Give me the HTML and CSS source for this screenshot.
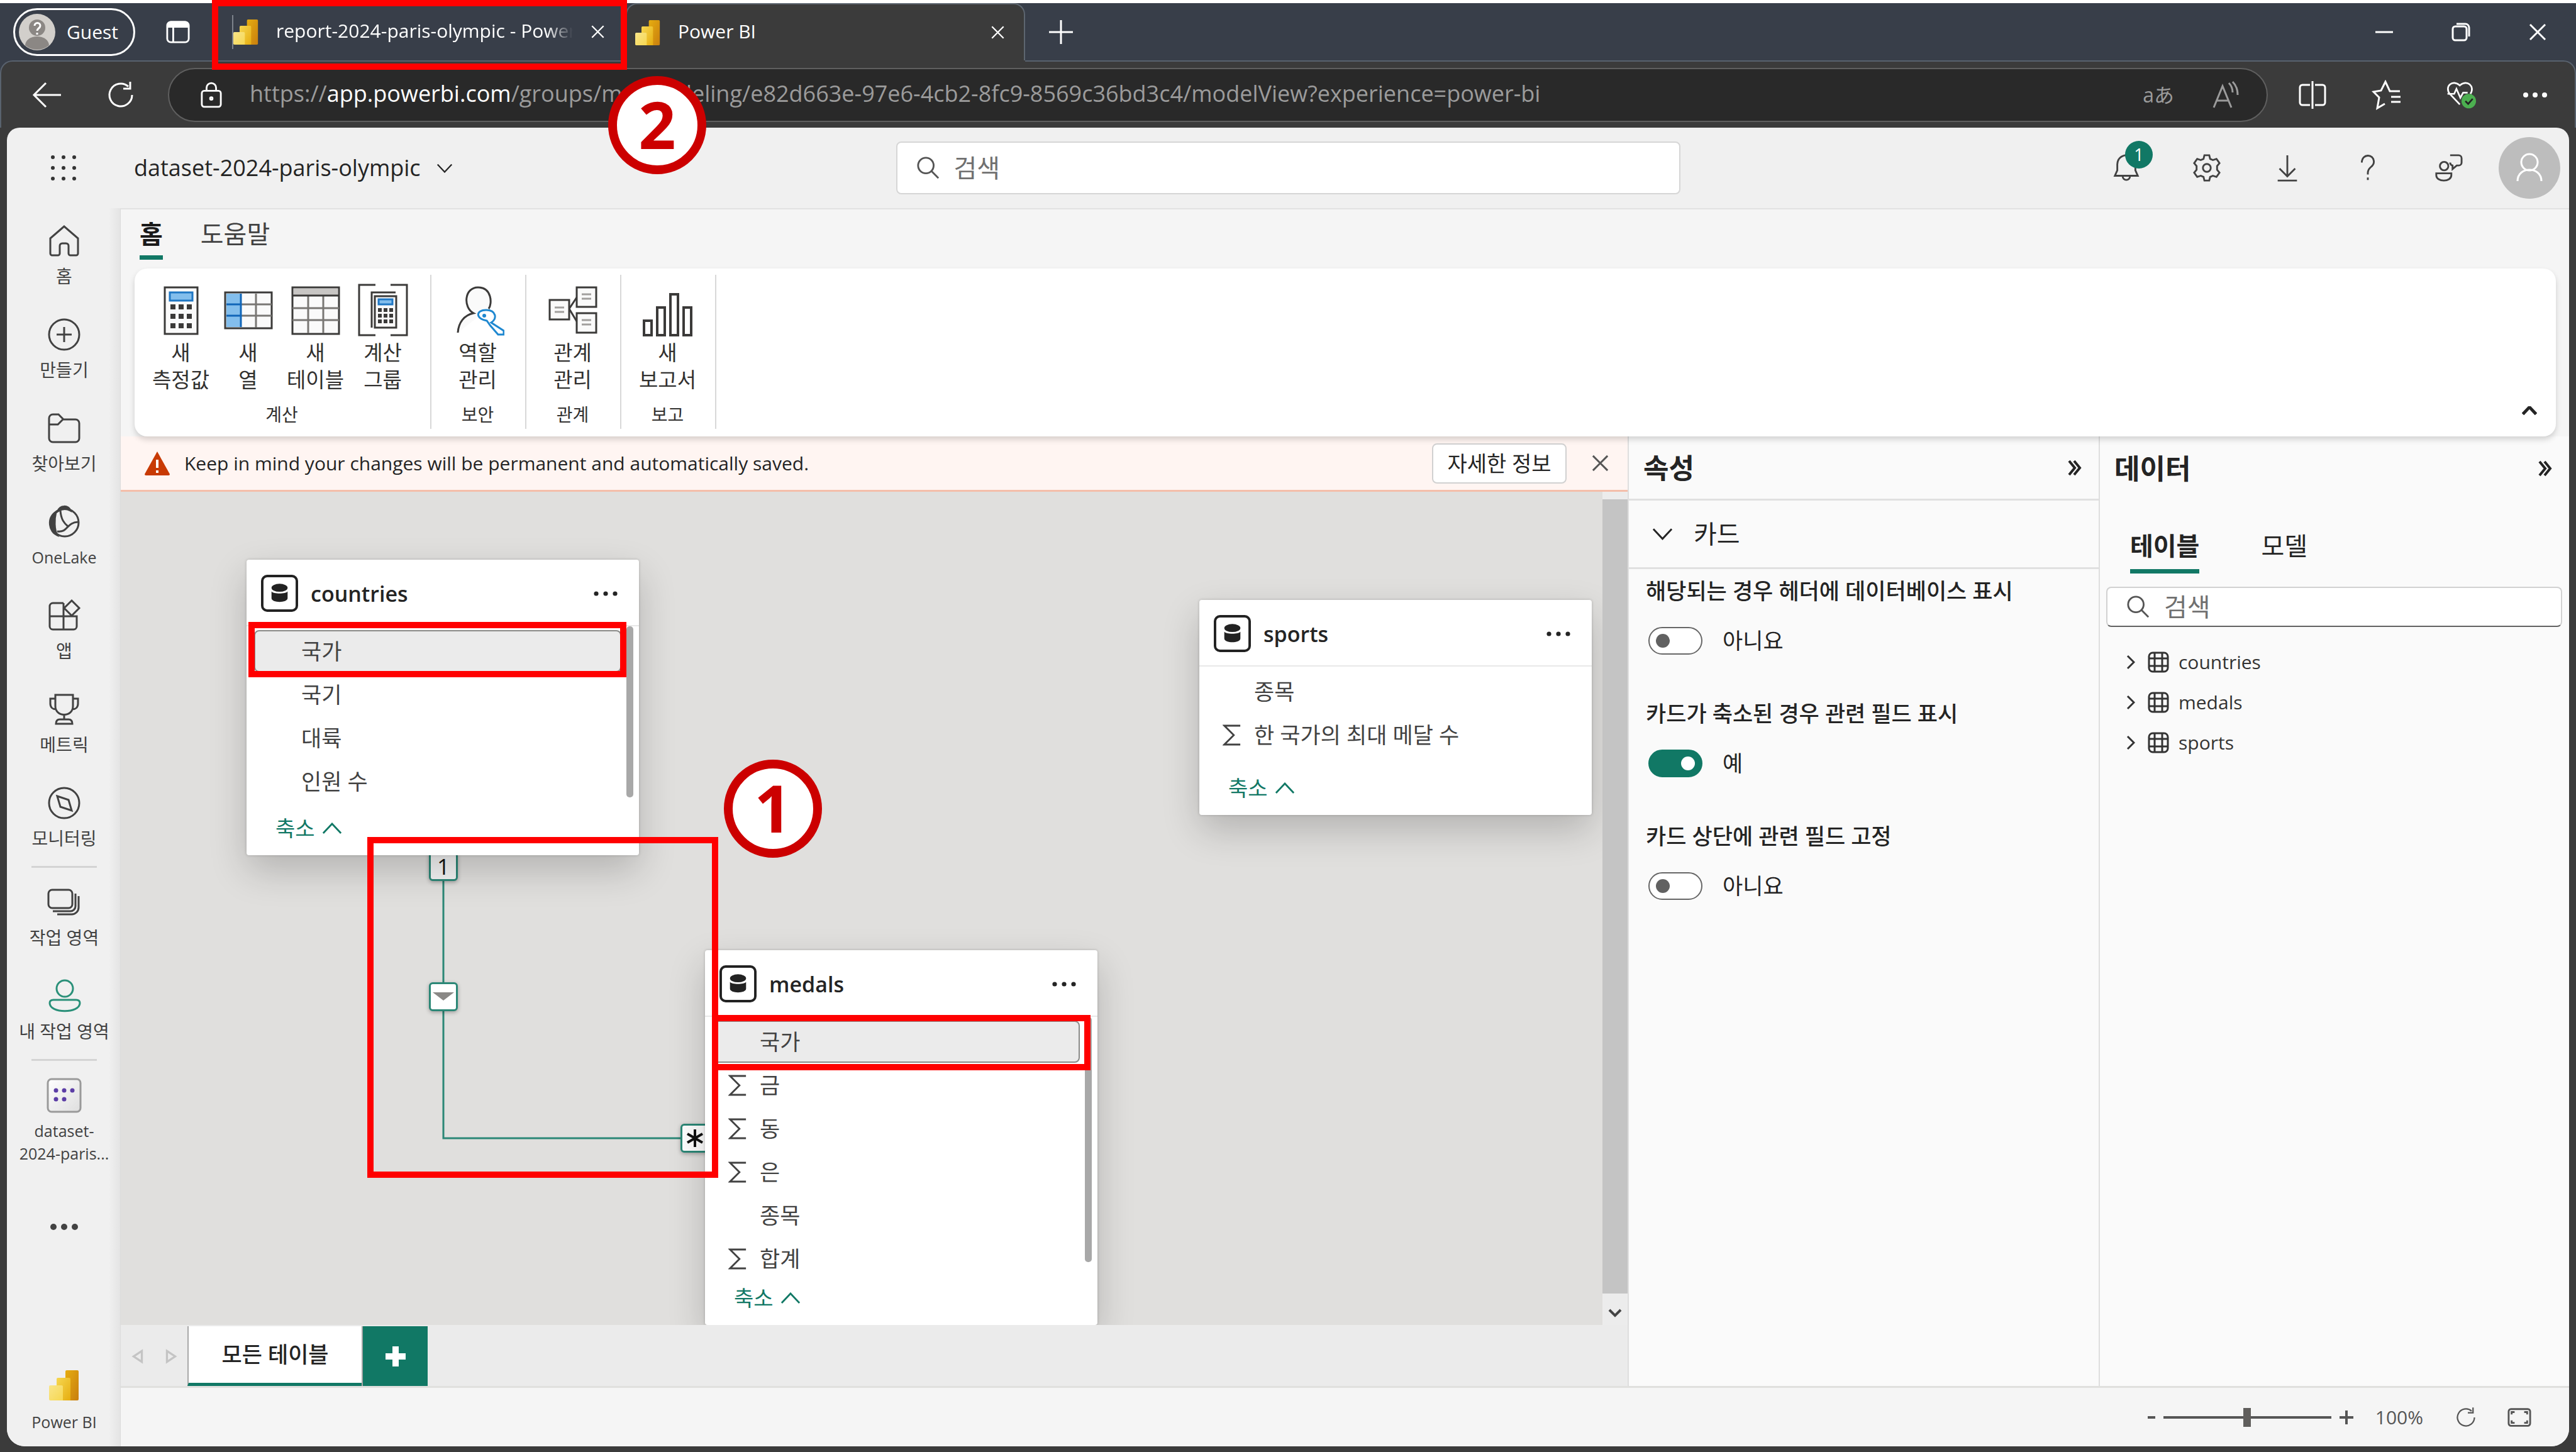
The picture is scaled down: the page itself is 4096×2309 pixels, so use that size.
FILE: index.html
```html
<!DOCTYPE html>
<html lang="ko">
<head>
<meta charset="utf-8">
<title>Power BI</title>
<link rel="stylesheet" href="styles.css">
</head>
<body>
<svg class="defs" aria-hidden="true">
  <defs>
    <linearGradient id="gold-a" x1="0" y1="0" x2="1" y2="1"><stop offset="0" stop-color="#e6ad10"/><stop offset="1" stop-color="#c87e0e"/></linearGradient>
    <linearGradient id="gold-b" x1="0" y1="0" x2="1" y2="1"><stop offset="0" stop-color="#f6d751"/><stop offset="1" stop-color="#e6ad10"/></linearGradient>
    <linearGradient id="gold-c" x1="0" y1="0" x2="1" y2="1"><stop offset="0" stop-color="#f9e589"/><stop offset="1" stop-color="#f6d751"/></linearGradient>
    <linearGradient id="tile" x1="0" y1="0" x2="1" y2="1"><stop offset="0" stop-color="#ffffff"/><stop offset="1" stop-color="#dedede"/></linearGradient>
    <symbol id="pbi" viewBox="0 0 48 48"><rect x="26" y="0" width="21" height="48" rx="2" fill="url(#gold-a)"/><path d="M14 12h18a2 2 0 0 1 2 2v34H12V14a2 2 0 0 1 2-2z" fill="url(#gold-b)"/><path d="M2 24h18a2 2 0 0 1 2 2v22H2a2 2 0 0 1-2-2V26a2 2 0 0 1 2-2z" fill="url(#gold-c)"/></symbol>
    <symbol id="search" viewBox="0 0 40 40"><circle cx="16" cy="16" r="13"/><path d="M25 25l12 12"/></symbol>
    <symbol id="close" viewBox="0 0 30 30"><path d="M3 3l24 24M27 3L3 27"/></symbol>
    <symbol id="reload" viewBox="0 0 48 48"><path d="M42 24a18 18 0 1 1-6-13.400M39 3v11H28"/></symbol>
    <symbol id="sigma" viewBox="0 0 32 36"><path d="M30 2H3l16 16L3 34h27"/></symbol>
    <symbol id="up" viewBox="0 0 34 20"><path d="M2 18L17 2l15 16"/></symbol>
    <symbol id="down" viewBox="0 0 34 20"><path d="M2 2l15 16L32 2"/></symbol>
    <symbol id="dots" viewBox="0 0 40 10"><circle cx="5" cy="5" r="3.600"/><circle cx="20" cy="5" r="3.600"/><circle cx="35" cy="5" r="3.600"/></symbol>
    <symbol id="db" viewBox="0 0 60 60"><rect x="2" y="2" width="56" height="56" rx="8" fill="#fff" stroke="#222" stroke-width="4"/><ellipse cx="30" cy="21" rx="13" ry="6.500" fill="#222"/><path d="M17 27c3 4.500 23 4.500 26 0v11c0 8-26 8-26 0z" fill="#222"/></symbol>
    <symbol id="grid" viewBox="0 0 34 34"><rect x="2" y="2" width="30" height="30" rx="6"/><path d="M11 2v30M23 2v30M2 11h30M2 23h30"/></symbol>
  </defs>
</svg>

<div class="browser">
  <header class="tabstrip">
    <button class="guest"><svg viewBox="0 0 58 58"><circle cx="29" cy="29" r="29" fill="#d2cfcb"/><path d="M10 50a19 14 0 0 1 38 0 29 29 0 0 1-38 0z" fill="#8b8784"/><circle cx="29" cy="22" r="13" fill="#8b8784"/><path d="M25 19c0-6 9-6 9 0 0 4-5 4-5 8m0 3v3" fill="none" stroke="#fff" stroke-width="3"/></svg>Guest</button>
    <button class="icon-btn tab-actions" aria-label="탭 작업"><svg viewBox="0 0 40 40"><rect x="2" y="3" width="36" height="34" rx="6"/><path d="M3 11h34V8a5 5 0 0 0-5-5H8a5 5 0 0 0-5 5z" fill="#fff"/><path d="M12 11v26"/></svg></button>
    <div class="tab tab-idle"><svg class="fav"><use href="#pbi"/></svg><span class="tab-title fade">report-2024-paris-olympic - Power BI</span><button class="icon-btn tab-x" aria-label="닫기"><svg><use href="#close"/></svg></button></div>
    <div class="tab tab-active"><svg class="fav"><use href="#pbi"/></svg><span class="tab-title">Power BI</span><button class="icon-btn tab-x" aria-label="닫기"><svg><use href="#close"/></svg></button></div>
    <button class="icon-btn new-tab" aria-label="새 탭"><svg viewBox="0 0 40 40"><path d="M20 1v38M1 20h38"/></svg></button>
    <div class="win-controls">
      <button class="icon-btn" aria-label="최소화"><svg viewBox="0 0 30 30"><path d="M1 15h28"/></svg></button>
      <button class="icon-btn" aria-label="이전 크기로"><svg viewBox="0 0 30 30"><rect x="2" y="6" width="22" height="22" rx="4"/><path d="M8 2h14a6 6 0 0 1 6 6v14"/></svg></button>
      <button class="icon-btn" aria-label="닫기"><svg><use href="#close"/></svg></button>
    </div>
  </header>

  <div class="toolbar">
    <div class="nav-btns">
      <button class="icon-btn" aria-label="뒤로"><svg viewBox="0 0 48 48"><path d="M22 5L3 24l19 19M3 24h43"/></svg></button>
      <button class="icon-btn" aria-label="새로 고침"><svg><use href="#reload"/></svg></button>
    </div>
    <div class="address">
      <svg class="lock" viewBox="0 0 36 44"><rect x="2" y="15" width="32" height="27" rx="4"/><path d="M10 15v-5a8 8 0 0 1 16 0v5"/><circle cx="18" cy="28" r="2"/></svg>
      <div class="url">https://<span class="host">app.powerbi.com</span>/groups/me/modeling/e82d663e-97e6-4cb2-8fc9-8569c36bd3c4/modelView?experience=power-bi</div>
      <span class="translate">aあ</span>
      <svg class="aloud" viewBox="0 0 44 44"><path d="M3 42L17 8l14 34M8 31h18M27 3c4 4 6 9 6 15M33 1c6 6 8 13 8 21"/></svg>
    </div>
    <div class="tool-btns">
      <button class="icon-btn" aria-label="화면 분할"><svg viewBox="0 0 48 48"><path d="M20 8H8a4 4 0 0 0-4 4v24a4 4 0 0 0 4 4h12M28 8h12a4 4 0 0 1 4 4v24a4 4 0 0 1-4 4H28M24 2v44"/></svg></button>
      <button class="icon-btn" aria-label="즐겨찾기"><svg viewBox="0 0 48 48"><path d="M45 18H29L22 3l-7 14-12 2 9 9-3 17 12-7M31 27h15M31 35h15"/></svg></button>
      <button class="icon-btn" aria-label="브라우저 필수 요소"><svg viewBox="0 0 54 54"><path d="M25 44L7 25C-3 12 12-2 25 10 38-2 53 12 44 25"/><path d="M3 25h12l4-9 7 16 5-9h8"/><circle cx="41" cy="38" r="13" fill="#4caf50" stroke="none"/><path d="M35 38l5 5 8-9" stroke="#222"/></svg></button>
      <button class="icon-btn solid" aria-label="설정 및 기타"><svg viewBox="0 0 48 48"><circle cx="9" cy="24" r="4"/><circle cx="24" cy="24" r="4"/><circle cx="39" cy="24" r="4"/></svg></button>
    </div>
  </div>

  <div class="app">
    <header class="app-header">
      <div class="head-left">
        <button class="icon-btn waffle" aria-label="앱 시작 관리자"><svg viewBox="0 0 42 42"><circle cx="4" cy="4" r="3"/><circle cx="21" cy="4" r="3"/><circle cx="38" cy="4" r="3"/><circle cx="4" cy="21" r="3"/><circle cx="21" cy="21" r="3"/><circle cx="38" cy="21" r="3"/><circle cx="4" cy="38" r="3"/><circle cx="21" cy="38" r="3"/><circle cx="38" cy="38" r="3"/></svg></button>
        <button class="doc-name">dataset-2024-paris-olympic<svg><use href="#down"/></svg></button>
      </div>
      <label class="search-box"><svg><use href="#search"/></svg><input type="search" placeholder="검색" aria-label="검색"></label>
      <div class="head-right">
        <button class="icon-btn bell" aria-label="알림"><svg viewBox="0 0 48 48"><path d="M5 37h38l-4-9V18a15 15 0 0 0-30 0v10zM18 38a6 6 0 0 0 12 0"/></svg><span class="count">1</span></button>
        <button class="icon-btn" aria-label="설정"><svg viewBox="0 0 48 48"><path d="M20 3h8l1.500 6 4.500 2 6-2 5 7-4 5v6l4 5-5 7-6-2-4.500 2L28 45h-8l-1.500-6-4.500-2-6 2-5-7 4-5v-6l-4-5 5-7 6 2 4.500-2z"/><circle cx="24" cy="24" r="6.500"/></svg></button>
        <button class="icon-btn" aria-label="다운로드"><svg viewBox="0 0 48 48"><path d="M24 3v34M11 25l13 13 13-13M8 45h32"/></svg></button>
        <button class="icon-btn" aria-label="도움말"><svg viewBox="0 0 48 48"><path d="M14 15c0-15 20-15 20-1 0 9-10 8-10 18v3M24 40v4"/></svg></button>
        <button class="icon-btn" aria-label="피드백"><svg viewBox="0 0 48 48"><circle cx="17" cy="21" r="7"/><path d="M4 33h25v3c0 12-25 12-25 0zM27 3h14a5 5 0 0 1 5 5v7a5 5 0 0 1-5 5h-3l-7 6v-6c-3-1-4-2-4-5"/></svg></button>
        <button class="avatar" aria-label="계정"><svg viewBox="0 0 98 98"><circle cx="49" cy="40" r="13"/><path d="M30 70c0-24 38-24 38 0"/></svg></button>
      </div>
    </header>

    <nav class="side">
      <a href="#" class="side-item"><svg viewBox="0 0 56 56"><path d="M28 5L6 24v24a3 3 0 0 0 3 3h9a3 3 0 0 0 3-3V36a4 4 0 0 1 4-4h6a4 4 0 0 1 4 4v12a3 3 0 0 0 3 3h9a3 3 0 0 0 3-3V24z"/></svg><span>홈</span></a>
      <a href="#" class="side-item"><svg viewBox="0 0 56 56"><circle cx="28" cy="28" r="24"/><path d="M28 16v24M16 28h24"/></svg><span>만들기</span></a>
      <a href="#" class="side-item"><svg viewBox="0 0 56 56"><path d="M4 12a6 6 0 0 1 6-6h9l8 8h19a6 6 0 0 1 6 6v24a6 6 0 0 1-6 6H10a6 6 0 0 1-6-6zM4 22h14l8-8"/></svg><span>찾아보기</span></a>
      <a href="#" class="side-item"><svg viewBox="0 0 56 56"><circle cx="29" cy="29" r="22"/><path d="M18 11C20 1 36 1 38 10 31 6 24 7 18 11z" fill="#424242"/><path d="M15 12C0 22 4 44 17 49c-5-9-5-25-2-37z" fill="#424242"/><path d="M22 10c1 14 6 20 12 25M17 43c18 2 14-14 33-15"/></svg><span class="latin">OneLake</span></a>
      <a href="#" class="side-item"><svg viewBox="0 0 56 56"><path d="M27 8H10a5 5 0 0 0-5 5v32a5 5 0 0 0 5 5h33a5 5 0 0 0 5-5V29H5M27 8v42M40 4l12 12-12 12-12-12z"/></svg><span>앱</span></a>
      <a href="#" class="side-item"><svg viewBox="0 0 56 56"><path d="M14 5h28v18c0 18-28 18-28 0zM14 11H6v8c0 6 4 9 9 9M42 11h8v8c0 6-4 9-9 9M28 37v7M15 51c0-5 2-7 6-7h14c4 0 6 2 6 7z"/></svg><span>메트릭</span></a>
      <a href="#" class="side-item"><svg viewBox="0 0 56 56"><circle cx="28" cy="28" r="24"/><path d="M17 17l18 6 5 17-18-6z"/></svg><span>모니터링</span></a>
      <hr>
      <a href="#" class="side-item"><svg viewBox="0 0 56 56"><rect x="3" y="8" width="38" height="29" rx="6"/><path d="M46 14v20a8 8 0 0 1-8 8H10M51 18v18a11 11 0 0 1-11 11H17"/></svg><span>작업 영역</span></a>
      <a href="#" class="side-item mine"><svg viewBox="0 0 56 56"><circle cx="29" cy="16" r="13"/><path d="M11 34h36c4 0 6 2 6 5 0 17-48 17-48 0 0-3 2-5 6-5z"/></svg><span>내 작업 영역</span></a>
      <hr>
      <a href="#" class="side-item tall"><svg viewBox="0 0 56 56"><rect x="2" y="2" width="52" height="52" rx="6" fill="url(#tile)" stroke="#9a9a9a"/><g fill="#5c3ea6" stroke="none"><circle cx="15" cy="20" r="3.500"/><circle cx="28" cy="20" r="3.500"/><circle cx="41" cy="20" r="3.500"/><circle cx="15" cy="34" r="3.500"/><circle cx="28" cy="34" r="3.500"/></g></svg><span class="latin">dataset-<br>2024-paris...</span></a>
      <button class="side-item more" aria-label="더 보기"><svg viewBox="0 0 56 56"><circle cx="11" cy="28" r="5"/><circle cx="28" cy="28" r="5"/><circle cx="45" cy="28" r="5"/></svg></button>
      <a href="#" class="side-item brand"><svg viewBox="0 0 48 60"><use href="#pbi" width="48" height="60"/></svg><span class="latin">Power BI</span></a>
    </nav>

    <div class="work">
      <div class="ribbon-tabs">
        <button class="rtab on">홈</button>
        <button class="rtab">도움말</button>
      </div>
      <section class="ribbon">
        <div class="rgroup">
          <div class="rbtns">
            <button class="rbtn"><svg viewBox="0 0 84 84"><rect x="16" y="6" width="52" height="74" fill="#fafafa"/><rect x="24" y="14" width="36" height="13" fill="#83beec" stroke="#1f77c4"/><g fill="#3b3a39" stroke="none"><path d="M25 33h8v8h-8zM38 33h8v8h-8zM51 33h8v8h-8zM25 48h8v8h-8zM38 48h8v8h-8zM51 48h8v8h-8zM25 63h8v8h-8zM38 63h8v8h-8zM51 63h8v8h-8z"/></g></svg>새<br>측정값</button>
            <button class="rbtn"><svg viewBox="0 0 84 84"><rect x="5" y="14" width="74" height="57" fill="#fafafa"/><path d="M7 16h22v53H7z" fill="#83beec" stroke="none"/><path d="M30 33h49M30 51h49M54 16v54" stroke="#797774"/><path d="M7 33h23M7 51h23M30 16v53" stroke="#1065b8"/></svg>새<br>열</button>
            <button class="rbtn"><svg viewBox="0 0 84 84"><rect x="5" y="6" width="74" height="74" fill="#fafafa"/><path d="M7 8h70v10H7z" fill="#c8c6c4" stroke="none"/><path d="M5 39h74M5 58h74M30 19v60M54 19v60" stroke="#797774"/><path d="M5 19h74"/></svg>새<br>테이블</button>
            <button class="rbtn"><svg viewBox="0 0 84 84"><path d="M30 2H4v80h26M54 2h26v80H54M24 70V14h38"/><rect x="29" y="20" width="34" height="50" fill="#fafafa"/><rect x="35" y="25" width="22" height="8" fill="#83beec" stroke="#1f77c4"/><g fill="#3b3a39" stroke="none"><path d="M34 39h6v6h-6zM43 39h6v6h-6zM52 39h6v6h-6zM34 48h6v6h-6zM43 48h6v6h-6zM52 48h6v6h-6zM34 57h6v6h-6zM43 57h6v6h-6zM52 57h6v6h-6z"/></g></svg>계산<br>그룹</button>
          </div>
          <div class="rlabel">계산</div>
        </div>
        <div class="rgroup">
          <div class="rbtns"><button class="rbtn"><svg viewBox="0 0 84 84"><path d="M59 40c6-8 5-34-17-34S18 38 35 47C20 50 11 62 10 78" fill="#fafafa"/><path d="M61 66l-5-7C38 56 38 42 55 42c16 0 18 14 8 20l20 13v6h-9z" fill="#fff" stroke="#1f88d0"/><circle cx="52" cy="51" r="3" fill="#1f88d0" stroke="none"/></svg>역할<br>관리</button></div>
          <div class="rlabel">보안</div>
        </div>
        <div class="rgroup">
          <div class="rbtns"><button class="rbtn"><svg viewBox="0 0 84 84"><path d="M36 40l12-18M36 40l12 20"/><rect x="5" y="26" width="31" height="31" fill="#fafafa"/><rect x="48" y="6" width="31" height="31" fill="#fafafa"/><rect x="48" y="47" width="31" height="31" fill="#fafafa"/><path d="M13 38h15M13 45h15M56 17h15M56 24h15M56 58h15M56 65h15" stroke="#a19f9d"/></svg>관계<br>관리</button></div>
          <div class="rlabel">관계</div>
        </div>
        <div class="rgroup">
          <div class="rbtns"><button class="rbtn"><svg viewBox="0 0 84 84"><g stroke-width="4"><rect x="4" y="59" width="12" height="23"/><rect x="25" y="38" width="12" height="44"/><rect x="46" y="17" width="12" height="65"/><rect x="67" y="38" width="12" height="44"/></g></svg>새<br>보고서</button></div>
          <div class="rlabel">보고</div>
        </div>
        <button class="icon-btn collapse" aria-label="리본 축소"><svg><use href="#up"/></svg></button>
      </section>

      <div class="panes">
        <section class="model">
          <div class="notice">
            <svg class="warn" viewBox="0 0 42 40"><path d="M21 1L41 37q0 2-2 2H3q-2 0-2-2z" fill="#c83a04"/><path d="M21 14v13M21 31v4" stroke="#fff" stroke-width="4"/></svg>
            <span class="msg">Keep in mind your changes will be permanent and automatically saved.</span>
            <button class="info">자세한 정보</button>
            <button class="icon-btn dismiss" aria-label="닫기"><svg><use href="#close"/></svg></button>
          </div>
          <div class="canvas-row">
            <div class="canvas">
              <svg class="link" viewBox="0 0 400 450"><path d="M2 0v448h398"/></svg>
              <div class="pin one">1</div>
              <div class="pin dir"><svg viewBox="0 0 34 14"><path d="M0 0h34L17 13z"/></svg></div>
              <div class="pin many"><svg viewBox="0 0 30 30"><path d="M15 1v28M3 8l24 14M27 8L3 22"/></svg></div>

              <article class="node countries">
                <header><svg class="dbi"><use href="#db"/></svg><h3>countries</h3><button class="icon-btn" aria-label="추가 옵션"><svg><use href="#dots"/></svg></button></header>
                <ul>
                  <li class="sel">국가</li><li>국기</li><li>대륙</li><li>인원 수</li>
                </ul>
                <i class="bar"></i>
                <button class="fold">축소<svg><use href="#up"/></svg></button>
              </article>
              <article class="node sports">
                <header><svg class="dbi"><use href="#db"/></svg><h3>sports</h3><button class="icon-btn" aria-label="추가 옵션"><svg><use href="#dots"/></svg></button></header>
                <ul>
                  <li>종목</li><li><svg class="sum"><use href="#sigma"/></svg>한 국가의 최대 메달 수</li>
                </ul>
                <button class="fold">축소<svg><use href="#up"/></svg></button>
              </article>
              <article class="node medals">
                <header><svg class="dbi"><use href="#db"/></svg><h3>medals</h3><button class="icon-btn" aria-label="추가 옵션"><svg><use href="#dots"/></svg></button></header>
                <ul>
                  <li class="sel">국가</li>
                  <li><svg class="sum"><use href="#sigma"/></svg>금</li>
                  <li><svg class="sum"><use href="#sigma"/></svg>동</li>
                  <li><svg class="sum"><use href="#sigma"/></svg>은</li>
                  <li>종목</li>
                  <li><svg class="sum"><use href="#sigma"/></svg>합계</li>
                </ul>
                <i class="bar"></i>
                <button class="fold">축소<svg><use href="#up"/></svg></button>
              </article>

              <div class="mark mark-country"></div>
              <div class="mark mark-link"></div>
              <div class="mark mark-medal"></div>
              <div class="step step-1">1</div>
            </div>
            <div class="vscroll"><i class="thumb"></i><svg viewBox="0 0 22 14"><path d="M2 2l9 9 9-9"/></svg></div>
          </div>
          <div class="sheets">
            <button class="icon-btn arrow" aria-label="이전"><svg viewBox="0 0 18 22"><path d="M15 3v16L3 11z"/></svg></button>
            <button class="icon-btn arrow" aria-label="다음"><svg viewBox="0 0 18 22"><path d="M3 3v16l12-8z"/></svg></button>
            <button class="sheet">모든 테이블</button>
            <button class="add" aria-label="새 레이아웃"><svg viewBox="0 0 32 32"><path d="M16 0v32M0 16h32"/></svg></button>
          </div>
        </section>

        <aside class="props">
          <div class="pane-head"><h2>속성</h2><button class="icon-btn" aria-label="축소"><svg viewBox="0 0 22 26"><path d="M2 2l9 11-9 11M10 2l9 11-9 11"/></svg></button></div>
          <button class="section"><svg><use href="#down"/></svg>카드</button>
          <div class="opts">
            <div class="opt"><b id="o1">해당되는 경우 헤더에 데이터베이스 표시</b><label><input type="checkbox" aria-labelledby="o1">아니요</label></div>
            <div class="opt"><b id="o2">카드가 축소된 경우 관련 필드 표시</b><label><input type="checkbox" aria-labelledby="o2" checked>예</label></div>
            <div class="opt"><b id="o3">카드 상단에 관련 필드 고정</b><label><input type="checkbox" aria-labelledby="o3">아니요</label></div>
          </div>
        </aside>

        <aside class="data">
          <div class="pane-head"><h2>데이터</h2><button class="icon-btn" aria-label="축소"><svg viewBox="0 0 22 26"><path d="M2 2l9 11-9 11M10 2l9 11-9 11"/></svg></button></div>
          <div class="dtabs"><button class="dtab on">테이블</button><button class="dtab">모델</button></div>
          <label class="dsearch"><svg><use href="#search"/></svg><input type="search" placeholder="검색" aria-label="데이터 검색"></label>
          <ul class="tree">
            <li><svg class="chev" viewBox="0 0 14 24"><path d="M2 2l10 10L2 22"/></svg><svg class="tbl"><use href="#grid"/></svg>countries</li>
            <li><svg class="chev" viewBox="0 0 14 24"><path d="M2 2l10 10L2 22"/></svg><svg class="tbl"><use href="#grid"/></svg>medals</li>
            <li><svg class="chev" viewBox="0 0 14 24"><path d="M2 2l10 10L2 22"/></svg><svg class="tbl"><use href="#grid"/></svg>sports</li>
          </ul>
        </aside>
      </div>

      <footer class="status">
        <button class="icon-btn zoom-out" aria-label="축소"><svg viewBox="0 0 22 22"><path d="M5 11h12"/></svg></button>
        <input type="range" min="0" max="200" value="100" aria-label="확대/축소">
        <button class="icon-btn zoom-in" aria-label="확대"><svg viewBox="0 0 22 22"><path d="M11 0v22M0 11h22"/></svg></button>
        <span class="pct">100%</span>
        <button class="icon-btn st" aria-label="다시 설정"><svg><use href="#reload"/></svg></button>
        <button class="icon-btn st" aria-label="화면에 맞추기"><svg viewBox="0 0 40 36"><rect x="2" y="4" width="36" height="28" rx="4"/><path d="M7 13V9h5M28 9h5v4M33 23v4h-5M12 27H7v-4"/></svg></button>
      </footer>
    </div>
  </div>

  <div class="mark mark-tab"></div>
  <div class="step step-2">2</div>
</div>
</body>
</html>
```
FILE: styles.css
```css
* { box-sizing: border-box; }
html, body { margin: 0; }
body {
  background: #3b3b3b;
  color: #242424;
  font-family: "Open Sans", "Noto Sans CJK KR", sans-serif;
  font-size: 35px;
  line-height: 42px;
}
.defs { position: absolute; width: 0; height: 0; }
button, input { font: inherit; color: inherit; }
button { background: none; border: 0; padding: 0; margin: 0; }
h2, h3, ul { margin: 0; padding: 0; }
ul { list-style: none; }
a { color: inherit; text-decoration: none; }
svg { display: block; flex: none; fill: none; stroke: currentColor; stroke-width: 3px; }
.icon-btn { display: flex; align-items: center; justify-content: center; flex: none; }

.browser {
  position: relative;
  display: flex;
  flex-direction: column;
  min-height: 100vh;
  border-top: 5px solid #fff;
  background: linear-gradient(#383e49 150px, #3b3b3b 150px);
}

/* Window tab strip */
.tabstrip {
  position: relative;
  z-index: 1;
  display: flex;
  align-items: center;
  height: 91px;
  padding-left: 21px;
  background: #383e49;
  color: #fff;
  font-size: 30px;
}
.guest {
  display: flex;
  align-items: center;
  gap: 18px;
  width: 194px;
  height: 76px;
  padding-left: 6px;
  border: 3px solid #fff;
  border-radius: 38px;
}
.guest svg { width: 58px; height: 58px; stroke: none; }
.tab-actions { width: 136px; }
.tab-actions svg { width: 38px; height: 38px; }
.tab { display: flex; align-items: center; gap: 28px; height: 91px; }
.fav { width: 40px; height: 44px; stroke: none; }
.tab-idle { width: 644px; padding: 0 33px 0 18px; }
.tab-idle::before { content: ""; width: 2px; height: 54px; margin-right: -28px; background: #7d838c; order: -1; }
.tab-title { flex: 1; padding-bottom: 3px; overflow: hidden; white-space: nowrap; }
.fade { mask-image: linear-gradient(90deg, #000 91%, transparent 100%); }
.tab-x svg { width: 23px; height: 23px; }
.tab-active {
  width: 635px;
  padding: 0 30px 0 13px;
  border: 2px solid #5d6670;
  border-bottom: 0;
  border-radius: 18px 18px 0 0;
  background: #3b3b3b;
  box-shadow: 0 3px 0 #3b3b3b;
}
.new-tab { width: 114px; }
.new-tab svg { width: 40px; height: 40px; }
.win-controls { display: flex; margin-left: auto; }
.win-controls .icon-btn { width: 122px; }
.win-controls svg { width: 30px; height: 30px; }

/* Address toolbar */
.toolbar {
  display: flex;
  align-items: center;
  height: 107px;
  border: 2px solid #59626e;
  border-bottom: 0;
  border-radius: 20px 20px 0 0;
  background: #3b3b3b;
  color: #fff;
}
.nav-btns { display: flex; padding-left: 14px; width: 265px; }
.nav-btns .icon-btn { width: 117px; }
.nav-btns svg, .tool-btns svg { width: 48px; height: 48px; }
.address {
  display: flex;
  align-items: center;
  flex: 1;
  height: 86px;
  padding: 0 43px 0 50px;
  border: 2px solid #5f5f5f;
  border-radius: 43px;
  background: #292929;
  color: #9b9b9b;
  font-size: 36px;
}
.lock { width: 34px; height: 44px; color: #fff; }
.url { flex: 1; margin-left: 44px; padding-bottom: 4px; white-space: nowrap; }
.host { color: #fff; }
.translate { font-size: 32px; font-family: "Open Sans", "Noto Sans CJK JP", sans-serif; white-space: nowrap; }
.aloud { width: 44px; height: 44px; margin-left: 60px; }
.tool-btns { display: flex; padding-left: 12px; width: 488px; }
.tool-btns .icon-btn { width: 118px; }
.solid svg { fill: currentColor; stroke: none; }

/* Application frame */
.app {
  display: grid;
  grid-template: 128px minmax(0, 1fr) / 180px minmax(0, 1fr);
  flex: 1;
  margin: 0 11px 9px;
  overflow: hidden;
  border-radius: 20px 20px 28px 28px;
  background: #f0f0f0;
}
.app-header {
  grid-column: 1 / 3;
  display: grid;
  grid-template-columns: minmax(0, 1fr) 1247px minmax(0, 1fr);
  align-items: center;
}
.head-left { display: flex; align-items: center; }
.waffle { width: 180px; }
.waffle svg { width: 42px; height: 42px; fill: #333; stroke: none; }
.doc-name { display: flex; align-items: center; gap: 25px; padding-left: 22px; font-size: 36px; }
.doc-name svg { width: 26px; height: 15px; stroke-width: 3px; }
.search-box {
  display: flex;
  align-items: center;
  gap: 22px;
  height: 84px;
  padding: 0 30px;
  border: 2px solid #d6d6d6;
  border-radius: 8px;
  background: #fff;
}
.search-box svg, .dsearch svg { width: 38px; height: 38px; color: #555; }
.search-box input, .dsearch input {
  flex: 1;
  min-width: 0;
  padding: 0;
  border: 0;
  outline: 0;
  background: none;
  font-size: 40px;
}
input::placeholder { color: #707070; opacity: 1; }
.head-right { display: flex; align-items: center; justify-content: flex-end; padding-right: 14px; color: #424242; }
.head-right .icon-btn { position: relative; width: 128px; }
.head-right .icon-btn svg { width: 46px; height: 46px; }
.count {
  position: absolute;
  left: 62px;
  top: -20px;
  width: 44px;
  height: 44px;
  border-radius: 50%;
  background: #117865;
  color: #fff;
  font-size: 27px;
  line-height: 44px;
  text-align: center;
}
.avatar { width: 98px; height: 98px; margin-left: 16px; border-radius: 50%; background: #bdbdbd; color: #fff; }

/* Side navigation */
.side {
  display: flex;
  flex-direction: column;
  align-items: center;
  padding-left: 2px;
  background: linear-gradient(90deg, #f0f0f0 90%, #e4e4e4);
  color: #424242;
  font-size: 28px;
  line-height: 36px;
  text-align: center;
  white-space: nowrap;
}
.side-item { display: flex; flex-direction: column; align-items: center; justify-content: center; gap: 10px; height: 149px; width: 100%; flex: none; }
.side-item svg { width: 56px; height: 56px; }
.side-item .latin { font-size: 25px; }
.side-item.tall { height: 186px; }
.side hr { width: 104px; height: 3px; margin: 3px 0; border: 0; background: #d4d4d4; flex: none; }
.mine svg { color: #2a9079; }
.more svg { fill: currentColor; stroke: none; }
.brand { margin-top: auto; }
.brand svg { height: 60px; stroke: none; }

/* Ribbon */
.work { display: flex; flex-direction: column; background: #f5f5f5; border-left: 1px solid #dcdcdc; border-top: 2px solid #e2e2e2; }
.ribbon-tabs { display: flex; gap: 60px; height: 94px; padding-left: 30px; font-size: 40px; color: #424242; }
.rtab { height: 80px; padding-top: 4px; border-bottom: 7px solid transparent; }
.rtab.on { border-color: #117865; color: #1a1a1a; font-weight: 700; }
.ribbon {
  position: relative;
  z-index: 1;
  display: flex;
  height: 267px;
  margin: 0 21px 0 22px;
  padding: 10px 0 12px;
  border-radius: 20px;
  background: #fff;
  box-shadow: 0 5px 10px rgba(0, 0, 0, .16);
}
.rgroup { padding: 14px 22px 0 20px; border-right: 2px solid #d8d8d8; }
.rbtns { display: flex; justify-content: center; }
.rbtn { width: 107px; font-size: 33px; line-height: 43px; white-space: nowrap; color: #323130; }
.rbtn svg { width: 84px; height: 84px; margin: 0 auto 4px; stroke: #3b3a39; }
.rlabel { margin-top: 17px; font-size: 28px; line-height: 34px; text-align: center; color: #323130; }
.collapse { margin-left: auto; align-self: flex-end; width: 84px; height: 58px; }
.collapse svg { width: 24px; height: 14px; stroke-width: 7px; color: #242424; }

/* Work area */
.panes { display: flex; flex: 1; min-height: 0; }
.model { display: flex; flex-direction: column; flex: 1; min-width: 0; }
.notice {
  display: flex;
  align-items: center;
  height: 88px;
  padding-left: 37px;
  border-bottom: 3px solid #f4beaa;
  background: #fff5f2;
  font-size: 30px;
}
.warn { width: 42px; height: 40px; stroke: none; }
.msg { flex: 1; margin-left: 22px; }
.info { width: 214px; height: 64px; border: 2px solid #d1d1d1; border-radius: 8px; background: #fff; font-size: 34px; line-height: 58px; }
.dismiss { width: 88px; color: #555; margin-left: 9px; }
.dismiss svg { width: 29px; height: 29px; }
.canvas-row { display: flex; flex: 1; min-height: 0; }
.canvas { position: relative; flex: 1; overflow: hidden; background: #e0dfdd; }
.vscroll { display: flex; flex-direction: column; align-items: center; width: 40px; padding: 12px 0; background: #ececec; }
.thumb { flex: 1; width: 100%; background: #c4c4c4; }
.vscroll svg { width: 22px; height: 14px; margin-top: 24px; stroke-width: 4px; color: #444; }

/* Table cards on the diagram */
.node {
  position: absolute;
  display: flex;
  flex-direction: column;
  width: 624px;
  border-radius: 4px;
  background: #fff;
  box-shadow: 0 0 4px rgba(0, 0, 0, .2), 0 24px 60px rgba(0, 0, 0, .2);
}
.countries { left: 200px; top: 108px; height: 470px; }
.sports { left: 1715px; top: 172px; height: 342px; }
.medals { left: 929px; top: 729px; height: 596px; }
.node header { display: flex; align-items: center; height: 106px; padding: 3px 33px 0 23px; border-bottom: 2px solid #e8e8e8; }
.dbi { width: 59px; height: 59px; stroke: none; }
.node h3 { flex: 1; margin-left: 20px; font-size: 34px; font-weight: 600; }
.node header .icon-btn svg { width: 40px; height: 10px; fill: #242424; stroke: none; }
.node ul { flex: 1; min-height: 0; padding-top: 6px; }
.node li {
  display: flex;
  align-items: center;
  height: 67px;
  margin: 0 28px 2px 12px;
  padding-left: 73px;
  border: 2px solid transparent;
  border-radius: 8px;
  color: #424242;
}
.node .sel { border-color: #8a8a88; background: #ebebeb; }
.sum { width: 30px; height: 34px; margin-left: -50px; margin-right: 20px; }
.bar { position: absolute; right: 9px; top: 106px; width: 11px; height: 272px; border-radius: 5px; background: #a8a8a8; }
.medals .bar { height: 390px; }
.fold { display: flex; align-items: center; gap: 11px; height: 86px; padding-left: 46px; color: #117865; font-size: 34px; }
.fold svg { width: 32px; height: 19px; }

/* Relationship line and its end markers */
.link { position: absolute; left: 511px; top: 580px; width: 400px; height: 450px; color: #2b8776; }
.pin {
  position: absolute;
  display: flex;
  align-items: center;
  justify-content: center;
  width: 46px;
  height: 46px;
  border: 3px solid #2b8776;
  border-radius: 6px;
  background: #fff;
  color: #111;
  box-shadow: 0 2px 6px rgba(0, 0, 0, .3);
}
.one { left: 490px; top: 573px; background: #f5f5f5; }
.dir { left: 490px; top: 780px; }
.dir svg { width: 34px; height: 14px; fill: #8a8886; stroke: none; }
.many { left: 890px; top: 1005px; }
.many svg { width: 30px; height: 30px; stroke-width: 4px; }

/* Step annotations */
.mark { position: absolute; border: 10px solid #f00; }
.mark-country { left: 203px; top: 207px; width: 601px; height: 88px; }
.mark-link { left: 392px; top: 549px; width: 558px; height: 542px; }
.mark-medal { left: 940px; top: 832px; width: 602px; height: 88px; }
.mark-tab { left: 337px; top: -5px; width: 660px; height: 111px; z-index: 2; }
.step {
  position: absolute;
  width: 156px;
  height: 156px;
  border: 14px solid #c00;
  border-radius: 50%;
  background: #fff;
  color: #c00;
  font-size: 104px;
  font-weight: 700;
  line-height: 124px;
  text-align: center;
  z-index: 2;
}
.step-1 { left: 959px; top: 426px; }
.step-2 { left: 967px; top: 116px; }

/* Layout tabs under the canvas */
.sheets { display: flex; align-items: center; height: 97px; padding-top: 2px; background: #ebebeb; }
.arrow { width: 53px; color: #c4c4c4; }
.arrow svg { width: 20px; height: 24px; }
.sheet {
  align-self: stretch;
  width: 277px;
  border-left: 2px solid #a8a8a8;
  border-bottom: 5px solid #117865;
  background: #fff;
  font-weight: 500;
}
.add { display: flex; align-items: center; justify-content: center; align-self: stretch; width: 105px; background: #117865; color: #fff; border-left: 2px solid #a8a8a8; }
.add svg { width: 32px; height: 32px; stroke-width: 10px; }

/* Side panes */
.props { width: 749px; background: #fafafa; border-left: 2px solid #dedede; }
.data { width: 748px; background: #fafafa; border-left: 2px solid #dedede; }
.pane-head { display: flex; align-items: center; justify-content: space-between; height: 102px; padding: 0 27px 0 23px; }
.pane-head h2 { font-size: 44px; font-weight: 700; line-height: 52px; }
.pane-head svg { width: 22px; height: 26px; stroke-width: 4px; }
.props .pane-head { border-bottom: 3px solid #e0e0e0; }
.section { display: flex; align-items: center; gap: 33px; width: 100%; height: 109px; padding-left: 37px; border-bottom: 3px solid #e0e0e0; font-size: 40px; }
.section svg { width: 33px; height: 20px; }
.opts { display: flex; flex-direction: column; gap: 73px; padding: 14px 27px; }
.opt { display: flex; flex-direction: column; gap: 36px; }
.opt b { font-weight: 500; white-space: nowrap; }
.opt label { display: flex; align-items: center; gap: 32px; height: 44px; padding-left: 4px; }
.opt input {
  appearance: none;
  display: flex;
  align-items: center;
  width: 86px;
  height: 44px;
  margin: 0;
  padding: 0 10px;
  border: 2px solid #666;
  border-radius: 22px;
  background: #fff;
}
.opt input::before { content: ""; width: 22px; height: 22px; border-radius: 50%; background: #616161; }
.opt input:checked { justify-content: flex-end; border-color: #117865; background: #117865; }
.opt input:checked::before { background: #fff; }
.dtabs { display: flex; gap: 98px; height: 137px; padding: 34px 0 0 48px; font-size: 40px; }
.dtab { height: 82px; border-bottom: 7px solid transparent; }
.dtab.on { border-color: #117865; font-weight: 700; }
.dsearch {
  display: flex;
  align-items: center;
  gap: 22px;
  height: 64px;
  margin: 0 11px 0 10px;
  padding: 0 30px;
  border: 2px solid #d1d1d1;
  border-bottom-color: #616161;
  border-radius: 8px;
  background: #fff;
}
.tree { padding: 24px 0 0 42px; font-size: 30px; color: #333; }
.tree li { display: flex; align-items: center; height: 64px; }
.chev { width: 14px; height: 24px; }
.tbl { width: 34px; height: 34px; margin: 0 15px 0 20px; }

/* Status bar */
.status { display: flex; align-items: center; justify-content: flex-end; height: 96px; padding-right: 44px; border-top: 3px solid #e0e0de; color: #555; font-size: 30px; }
.zoom-out, .zoom-in { width: 22px; }
.zoom-out svg, .zoom-in svg { width: 22px; height: 22px; stroke-width: 4px; }
.status input { appearance: none; width: 267px; height: 30px; margin: 0 13px 0 8px; background: linear-gradient(#555, #555) center / 100% 4px no-repeat; }
.status input::-webkit-slider-thumb { appearance: none; width: 12px; height: 30px; background: #605e5c; }
.pct { margin: 0 25px 0 35px; }
.st { width: 85px; }
.st svg { width: 38px; height: 36px; }
.st:last-child { margin-right: -7px; }
```
